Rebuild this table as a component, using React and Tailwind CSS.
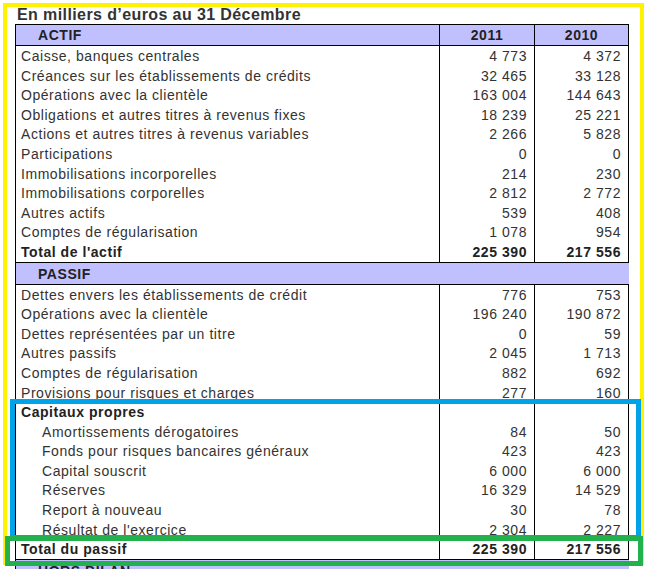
const actif = [
  ['Caisse, banques centrales', '4 773', '4 372'],
  ['Créances sur les établissements de crédits', '32 465', '33 128'],
  ['Opérations avec la clientèle', '163 004', '144 643'],
  ['Obligations et autres titres à revenus fixes', '18 239', '25 221'],
  ['Actions et autres titres à revenus variables', '2 266', '5 828'],
  ['Participations', '0', '0'],
  ['Immobilisations incorporelles', '214', '230'],
  ['Immobilisations corporelles', '2 812', '2 772'],
  ['Autres actifs', '539', '408'],
  ['Comptes de régularisation', '1 078', '954'],
]

const passif = [
  ['Dettes envers les établissements de crédit', '776', '753'],
  ['Opérations avec la clientèle', '196 240', '190 872'],
  ['Dettes représentées par un titre', '0', '59'],
  ['Autres passifs', '2 045', '1 713'],
  ['Comptes de régularisation', '882', '692'],
  ['Provisions pour risques et charges', '277', '160'],
]

const capitaux = [
  ['Amortissements dérogatoires', '84', '50'],
  ['Fonds pour risques bancaires généraux', '423', '423'],
  ['Capital souscrit', '6 000', '6 000'],
  ['Réserves', '16 329', '14 529'],
  ['Report à nouveau', '30', '78'],
  ['Résultat de l\'exercice', '2 304', '2 227'],
]

function Row({ label, a, b, bold, indent }) {
  const weight = bold ? 'font-bold text-[#222]' : 'text-[#333]'
  return (
    <div className={`flex h-[19.6px] leading-[21.8px] ${weight}`}>
      <div className={`w-[425px] border-x border-black ${indent ? 'pl-[26px]' : 'pl-[5px]'}`}>{label}</div>
      <div className="w-[95px] border-r border-black pr-[7px] text-right">{a}</div>
      <div className="w-[94px] border-r border-black pr-[7px] text-right">{b}</div>
    </div>
  )
}

function Section({ title }) {
  return (
    <div className="h-[23px] leading-[22px] w-[614px] border-y border-l border-black bg-[#c0c0ff] pl-[22px] font-bold text-[#222]">
      {title}
    </div>
  )
}

export default function App() {
  return (
    <div
      className="relative w-[646px] h-[569px] overflow-hidden bg-white text-[14px] tracking-[0.55px]"
      style={{ fontFamily: '"Liberation Sans", Arial, sans-serif' }}
    >
      <div className="pt-[6px]">
        <div className="h-[18px] leading-[18px] pl-[17px] text-[16px] font-bold tracking-[0.4px] text-[#333]">
          En milliers d’euros au 31 Décembre
        </div>

        <div className="ml-[15px] w-[614px]">
          {/* header */}
          <div className="flex h-[22px] leading-[21px] border-y border-black bg-[#c0c0ff] font-bold text-[#222]">
            <div className="w-[425px] border-x border-black pl-[22px]">ACTIF</div>
            <div className="w-[95px] border-r border-black text-center">2011</div>
            <div className="w-[94px] border-r border-black text-center">2010</div>
          </div>

          {actif.map(([l, a, b]) => (
            <Row key={l} label={l} a={a} b={b} />
          ))}
          <Row label="Total de l'actif" a="225 390" b="217 556" bold />

          <Section title="PASSIF" />

          {passif.map(([l, a, b]) => (
            <Row key={l} label={l} a={a} b={b} />
          ))}
          <Row label="Capitaux propres" a="" b="" bold />
          {capitaux.map(([l, a, b]) => (
            <Row key={l} label={l} a={a} b={b} indent />
          ))}
          <Row label="Total du passif" a="225 390" b="217 556" bold />

          <Section title="HORS BILAN" />
        </div>
      </div>

      {/* highlight frames drawn over the table */}
      <div className="absolute left-[3px] top-[3px] w-[641px] h-[562px] border-4 border-[#fff200]" />
      <div className="absolute left-[10px] top-[399px] w-[631px] h-[141px] border-[5px] border-[#00a2e8]" />
      <div className="absolute left-[5px] top-[536px] w-[638px] h-[30px] border-[5px] border-[#22b14c]" />
    </div>
  )
}
